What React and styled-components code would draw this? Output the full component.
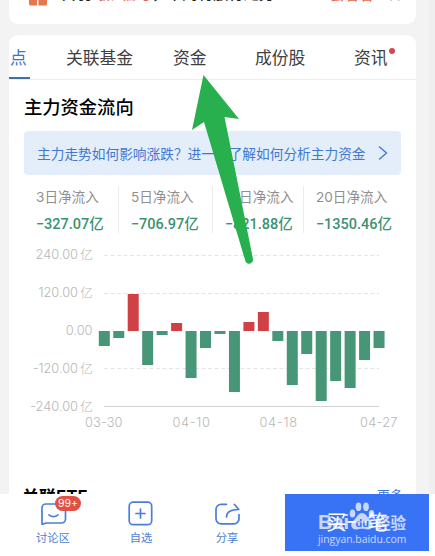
import React from "react";
import styled, { createGlobalStyle } from "styled-components";

const tabs = [
  { name: "点", left: 10, active: true },
  { name: "关联基金", left: 66 },
  { name: "资金", left: 173 },
  { name: "成份股", left: 255 },
  { name: "资讯", left: 354, dot: true },
];

const flows = [
  { label: "3日净流入", value: "327.07亿", width: 95 },
  { label: "5日净流入", value: "706.97亿", width: 94 },
  { label: "10日净流入", value: "821.88亿", width: 91 },
  { label: "20日净流入", value: "1350.46亿", width: 90 },
];

const bars = [
  -15, -7, 37, -34, -4, 8, -47, -17, -3, -61, 9, 19, -10, -54, -23, -70, -50,
  -57, -29, -17,
];

const yLabels = [
  { text: "240.00", unit: true, y: 259 },
  { text: "120.00", unit: true, y: 297 },
  { text: "0.00", y: 335 },
  { text: "-120.00", unit: true, y: 372.5 },
  { text: "-240.00", unit: true, y: 410.5 },
];

const xLabels = [
  { text: "03-30", x: 85 },
  { text: "04-10", x: 172.5 },
  { text: "04-18", x: 259.5 },
  { text: "04-27", x: 360 },
];

const FlowChart = () => (
  <Chart viewBox="9 240 407 195">
    {[255.5, 293.5, 368.5].map((y) => (
      <line key={y} x1="104" x2="379" y1={y} y2={y} stroke="#e4e4e4" strokeDasharray="4 2.5" />
    ))}
    <line x1="104" x2="379" y1="406.5" y2="406.5" stroke="#d2d2d2" />
    {yLabels.map((item) => (
      <g key={item.text}>
        <AxisText x={item.unit ? 78 : 92.5} y={item.y} textAnchor="end">
          {item.text}
        </AxisText>
        {item.unit && (
          <AxisText x="80" y={item.y}>
            亿
          </AxisText>
        )}
      </g>
    ))}
    {bars.map((v, i) => (
      <rect
        key={i}
        x={98.8 + i * 14.46}
        y={v > 0 ? 331 - v : 331}
        width="11"
        height={Math.abs(v)}
        fill={v > 0 ? "#d04145" : "#479678"}
      />
    ))}
    {xLabels.map((item) => (
      <AxisText key={item.text} x={item.x} y="427" textLength="37.5">
        {item.text}
      </AxisText>
    ))}
  </Chart>
);

const App = () => {
  return (
    <>
      <GlobalStyle />
      <Page>
        <Content>
          <Notice>
            <Gift viewBox="0 0 18 20">
              <path
                d="M0 0h8v19.500H1.500A1.500 1.500 0 0 1 0 18zM9.500 0H18v18a1.500 1.500 0 0 1-1.500 1.500h-7z"
                fill="#e9754c"
              />
            </Gift>
            <NoticeText>
              白羽<b>“抓”信号</b>，下周将放行走势
            </NoticeText>
            <NoticeLink>去看看</NoticeLink>
            <NoticeClose>×</NoticeClose>
          </Notice>
          <Card>
            <Tabs>
              {tabs.map((tab) => (
                <Tab key={tab.name} $left={tab.left} $active={tab.active}>
                  {tab.name}
                  {tab.dot && <Dot />}
                </Tab>
              ))}
            </Tabs>
            <Title>主力资金流向</Title>
            <Tip>
              <span>主力走势如何影响涨跌？进一步了解如何分析主力资金</span>
              <svg width="10" height="16" viewBox="0 0 10 16">
                <path d="M1 1.500 8.500 8 1 14.500" fill="none" stroke="#4a80d8" strokeWidth="1.500" />
              </svg>
            </Tip>
            <Flows>
              {flows.map((flow) => (
                <Flow key={flow.label} $width={flow.width}>
                  <FlowLabel>{flow.label}</FlowLabel>
                  <FlowValue>
                    <i>−</i>
                    {flow.value}
                  </FlowValue>
                </Flow>
              ))}
            </Flows>
            <FlowChart />
            <EtfHeader>
              <h3>关联ETF</h3>
              <span>更多</span>
            </EtfHeader>
          </Card>
        </Content>

        <BottomBar>
          <Action $left={31}>
            <svg width="44" height="34" viewBox="0 0 44 34">
              <path d="M11 30.200V14a4 4 0 0 1 4-4h15.500a4 4 0 0 1 4 4v11a4 4 0 0 1-4 4H16z" />
              <path d="M18 20.800q4.500 3.600 9 0" />
            </svg>
            <span>讨论区</span>
            <Badge>99+</Badge>
          </Action>
          <Action $left={119}>
            <svg width="44" height="34" viewBox="0 0 44 34">
              <rect x="10.200" y="8.200" width="22.500" height="22.500" rx="4" />
              <path d="M17 19.500h9M21.500 15v9" />
            </svg>
            <span>自选</span>
          </Action>
          <Action $left={205}>
            <svg width="44" height="34" viewBox="0 0 44 34">
              <path d="M21.500 10.300H16a5 5 0 0 0-5 5v9.500a5 5 0 0 0 5 5h13a5 5 0 0 0 5-5V20.500" />
              <path d="M21.500 23c0-5 3.500-7.500 12.300-7.500L29.500 10.500" />
            </svg>
            <span>分享</span>
          </Action>
          <Buy>买一笔</Buy>
        </BottomBar>

        <Arrow viewBox="0 0 70 200">
          <path
            d="M13.500 5 49 49l-14.500-2L63 189a4 4 0 0 1-7.500 2.500L14 52 2 60z"
            fill="#27b04d"
          />
        </Arrow>

        <Watermark>
          <Brand>
            <Bai>Bai</Bai>
            <svg width="26" height="29" viewBox="0 0 26 29">
              <ellipse cx="3.500" cy="11.500" rx="2.800" ry="4" />
              <ellipse cx="9.500" cy="4.800" rx="2.900" ry="4.300" />
              <ellipse cx="17" cy="4.800" rx="2.900" ry="4.300" />
              <ellipse cx="22.500" cy="12" rx="2.800" ry="4" />
              <path d="M13 11c-4 0-5.500 5-8.500 7.500-4 3.500-2.500 9 2.500 9 2.500 0 3.500-.7 6-.7s3.500.7 6 .7c5 0 6.500-5.500 2.500-9C18.500 16 17 11 13 11z" />
              <text x="6.500" y="25" fontSize="11">du</text>
            </svg>
            <Jingyan>经验</Jingyan>
          </Brand>
          <Url>jingyan.baidu.com</Url>
        </Watermark>
      </Page>
    </>
  );
};

export default App;

const GlobalStyle = createGlobalStyle`
  body {
    margin: 0;
    overflow: hidden;
    font-family: Inter, "Noto Sans CJK SC", sans-serif;
  }
  * {
    box-sizing: border-box;
  }
`;

const Page = styled.div`
  position: relative;
  width: 435px;
  height: 556px;
  display: flex;
  flex-direction: column;
  overflow: hidden;
  background: #fff;
`;

const Content = styled.div`
  height: 494px;
  padding: 0 13px 0 9px;
  border-right: 6px solid #efefef;
  overflow: hidden;
  background: #f3f3f3;
  display: flex;
  flex-direction: column;
  gap: 11px;
`;

const Notice = styled.div`
  flex: none;
  width: 407px;
  height: 24px;
  padding-left: 20px;
  display: flex;
  align-items: flex-start;
  border-radius: 0 0 9px 9px;
  background: #fff;
  overflow: hidden;
  white-space: nowrap;
`;

const Gift = styled.svg`
  width: 18px;
  height: 20px;
  margin-top: -14px;
`;

const NoticeText = styled.div`
  width: 269px;
  margin: -16px 0 0 14px;
  font-size: 15.3px;
  line-height: 20px;
  font-weight: 500;
  color: #222;
  b {
    font-weight: 500;
    color: #e2674a;
  }
`;

const NoticeLink = styled.div`
  margin-top: -15px;
  font-size: 14.5px;
  line-height: 20px;
  color: #e2674a;
`;

const NoticeClose = styled.div`
  margin: -16px 0 0 14px;
  font-size: 22px;
  line-height: 20px;
  color: #aaa;
`;

const Card = styled.div`
  flex: none;
  width: 407px;
  height: 480px;
  border-radius: 9px 9px 0 0;
  background: #fff;
  overflow: hidden;
`;

const Tabs = styled.div`
  display: grid;
  height: 45px;
  border-bottom: 1px solid #ececec;
`;

const Tab = styled.div`
  grid-area: 1 / 1;
  justify-self: start;
  position: relative;
  margin-left: ${(props) => (props.$active ? 0 : props.$left - 9)}px;
  width: ${(props) => (props.$active ? "21px" : "auto")};
  padding-left: ${(props) => (props.$active ? 1 : 0)}px;
  height: 44px;
  line-height: 46px;
  font-size: 16.8px;
  color: ${(props) => (props.$active ? "#4272c8" : "#404040")};
  border-bottom: ${(props) => (props.$active ? "2px solid #4070ac" : "0")};
`;

const Dot = styled.i`
  position: absolute;
  right: -7px;
  top: 13px;
  width: 6px;
  height: 6px;
  border-radius: 50%;
  background: #d4484a;
`;

const Title = styled.div`
  height: 51px;
  padding: 14px 0 0 15px;
  font-size: 18.3px;
  line-height: 27px;
  font-weight: 500;
  color: #000;
`;

const Tip = styled.div`
  display: flex;
  align-items: center;
  justify-content: space-between;
  width: 377px;
  height: 44px;
  margin-left: 15px;
  padding: 0 13px;
  border-radius: 4px;
  background: #e4eefb;
  color: #4179cf;
  font-size: 13.7px;
  white-space: nowrap;
`;

const Flows = styled.div`
  display: flex;
  height: 65px;
  padding: 11px 0 0 15px;
`;

const Flow = styled.div`
  width: ${(props) => props.$width}px;
  height: 47px;
  padding-left: 12px;
  border-right: 1px solid #ececec;
  white-space: nowrap;
  &:last-child {
    border: 0;
  }
`;

const FlowLabel = styled.div`
  height: 22px;
  font-size: 13.6px;
  line-height: 22px;
  color: #8f8f8f;
`;

const FlowValue = styled.div`
  margin-top: 6px;
  font-family: Roboto, "Noto Sans CJK SC", sans-serif;
  font-size: 14.5px;
  line-height: 22px;
  font-weight: 500;
  color: #3b9272;
  i {
    font-style: normal;
    display: inline-block;
    width: 8px;
  }
`;

const Chart = styled.svg`
  display: block;
  width: 407px;
  height: 195px;
`;

const AxisText = styled.text`
  font-family: Inter, "Noto Sans CJK SC", sans-serif;
  font-size: 12.8px;
  font-weight: 300;
  fill: #b7b7b7;
`;

const EtfHeader = styled.div`
  display: flex;
  justify-content: space-between;
  padding: 49px 13px 0 13px;
  h3 {
    margin: 0;
    font-size: 17px;
    line-height: 26px;
    font-weight: 600;
  }
  span {
    font-size: 13px;
    line-height: 22px;
    color: #4179cf;
  }
`;

const BottomBar = styled.div`
  display: grid;
  grid-template-columns: 285px 144px;
  height: 62px;
  background: #fff;
`;

const Action = styled.div`
  grid-area: 1 / 1;
  position: relative;
  width: 44px;
  height: 57px;
  margin-left: ${(props) => props.$left}px;
  display: flex;
  flex-direction: column;
  align-items: center;
  font-size: 11.3px;
  line-height: 18px;
  color: #4e7fd2;
  svg {
    flex: none;
    margin-bottom: 1px;
    fill: none;
    stroke: #4a7ed9;
    stroke-width: 1.7;
    stroke-linecap: round;
    stroke-linejoin: round;
  }
`;

const Badge = styled.div`
  position: absolute;
  left: 24px;
  top: 2px;
  width: 26px;
  height: 15px;
  border-radius: 8px;
  background: #de5144;
  color: #fff;
  font-size: 10.5px;
  line-height: 15px;
  text-align: center;
`;

const Buy = styled.div`
  grid-area: 1 / 2;
  height: 57px;
  background: #3973f5;
  color: #fff;
  text-align: center;
  font-size: 20.5px;
  line-height: 57px;
`;

const Arrow = styled.svg`
  position: absolute;
  left: 190px;
  top: 70px;
  width: 70px;
  height: 200px;
`;

const Watermark = styled.div`
  position: absolute;
  left: 318px;
  top: 502px;
  width: 90px;
  color: #fff;
  opacity: 0.72;
`;

const Brand = styled.div`
  display: flex;
  align-items: flex-end;
  height: 29px;
  font-weight: 700;
  svg {
    flex: none;
    fill: #fff;
  }
  text {
    font-family: "Liberation Sans", sans-serif;
    fill: #3973f5;
  }
`;

const Bai = styled.span`
  flex: none;
  width: 31px;
  font-family: "Liberation Sans", sans-serif;
  font-size: 20px;
  line-height: 17px;
`;

const Jingyan = styled.span`
  font-family: "Noto Sans CJK SC", sans-serif;
  font-size: 15.5px;
  line-height: 18px;
  white-space: nowrap;
`;

const Url = styled.div`
  margin-top: 1px;
  font-family: "Open Sans", sans-serif;
  font-size: 10.4px;
  line-height: 14px;
  white-space: nowrap;
`;
